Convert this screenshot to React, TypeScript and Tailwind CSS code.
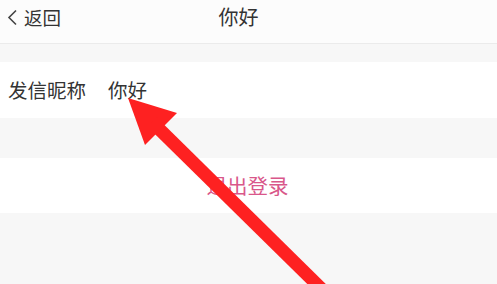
import React from "react";

export default function App() {
  const font = { fontFamily: '"Noto Sans CJK SC", "Noto Sans", sans-serif' };
  return (
    <div className="relative w-[497px] h-[284px] overflow-hidden bg-[#f7f7f7]" style={font}>
      <div className="h-[44px] bg-[#fcfcfc] border-b border-[#ebebeb]">
        <div className="relative h-[34px] flex items-center justify-center">
          <div className="absolute left-[7px] top-0 h-[34px] flex items-center gap-[6px] text-[#333]">
            <svg width="11" height="17" viewBox="0 0 11 17">
              <path d="M9 1.5 L2 8.5 L9 15.5" fill="none" stroke="#444" strokeWidth="1.6" />
            </svg>
            <span className="text-[18.5px] leading-none">返回</span>
          </div>
          <span className="text-[20px] leading-none text-[#333] mr-[20px]">你好</span>
        </div>
      </div>
      <div className="h-[18px]" />
      <div className="h-[56px] bg-white flex items-center pl-[8px] text-[19.5px] text-[#333]">
        <span>发信昵称</span>
        <span className="ml-[22px]">你好</span>
      </div>
      <div className="h-[40px]" />
      <div className="h-[55px] bg-white flex items-center justify-center">
        <span className="text-[20.5px] text-[#d9578a] mr-[2px]">退出登录</span>
      </div>
      <svg className="absolute inset-0 pointer-events-none" width="497" height="284" viewBox="0 0 497 284">
        <polygon points="128,98 177,113 145,145" fill="#fe2121" />
        <line x1="152" y1="122" x2="345" y2="312" stroke="#fe2121" strokeWidth="13" />
      </svg>
    </div>
  );
}
